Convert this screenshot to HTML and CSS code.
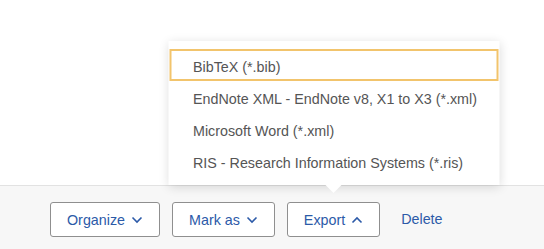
FILE: index.html
```html
<!DOCTYPE html>
<html lang="en">
<head>
    <meta charset="utf-8">
    <title>Export</title>
    <link rel="stylesheet" href="styles.css">
</head>
<body>
    <div class="page">
        <div class="content"></div>
        <div class="toolbar">
            <button class="tool-btn">Organize
                <svg class="chev" viewBox="0 0 12 8"><path d="M1.5 1.5 6 6l4.5-4.5"/></svg>
            </button>
            <button class="tool-btn">Mark as
                <svg class="chev" viewBox="0 0 12 8"><path d="M1.5 1.5 6 6l4.5-4.5"/></svg>
            </button>
            <div class="export-wrap">
                <div class="export-menu">
                    <a class="menu-item selected">BibTeX (*.bib)</a>
                    <a class="menu-item">EndNote XML - EndNote v8, X1 to X3 (*.xml)</a>
                    <a class="menu-item">Microsoft Word (*.xml)</a>
                    <a class="menu-item">RIS - Research Information Systems (*.ris)</a>
                </div>
                <button class="tool-btn">Export
                    <svg class="chev" viewBox="0 0 12 8"><path d="M1.5 6.5 6 2l4.5 4.5"/></svg>
                </button>
            </div>
            <a class="delete-link">Delete</a>
        </div>
    </div>
</body>
</html>
```

FILE: styles.css
```css
html, body {
    margin: 0;
    padding: 0;
    background: #fff;
    font-family: "Liberation Sans", Arial, sans-serif;
}
.page {
    width: 544px;
    height: 249px;
    display: flex;
    flex-direction: column;
    overflow: hidden;
}
.content {
    height: 185px;
}
.toolbar {
    flex: 1;
    background: #f7f7f7;
    border-top: 1px solid #e2e2e2;
    display: flex;
    align-items: flex-start;
    gap: 12px;
    padding: 16px 0 0 50px;
}
.tool-btn {
    height: 35px;
    padding: 0 16px;
    background: #fff;
    border: 1px solid #8f8f8f;
    border-radius: 3px;
    color: #2c5aa8;
    font-family: inherit;
    font-size: 14.3px;
    display: flex;
    align-items: center;
    gap: 6px;
    cursor: pointer;
}
.chev {
    width: 12px;
    height: 8px;
    fill: none;
    stroke: #2c5aa8;
    stroke-width: 1.6;
}
.export-wrap {
    position: relative;
}
.export-menu {
    position: absolute;
    bottom: 52px;
    left: 50%;
    transform: translateX(-50%);
    width: 331px;
    box-sizing: border-box;
    padding: 8px 0;
    background: #fff;
    box-shadow: 0 2px 10px rgba(0, 0, 0, 0.14);
    z-index: 2;
}
.export-menu::after {
    content: "";
    position: absolute;
    left: 50%;
    bottom: -8px;
    margin-left: -8px;
    border-left: 8px solid transparent;
    border-right: 8px solid transparent;
    border-top: 8px solid #fff;
}
.menu-item {
    display: block;
    height: 32px;
    line-height: 32px;
    margin: 0 1px;
    padding: 0 24px 0 22px;
    color: #555;
    font-size: 14.3px;
    white-space: nowrap;
    border: 2px solid transparent;
    box-sizing: border-box;
}
.menu-item.selected {
    border-color: #f2c46c;
}
.delete-link {
    color: #2c5aa8;
    font-size: 14.3px;
    line-height: 35px;
    margin-left: 9px;
    cursor: pointer;
}
```
